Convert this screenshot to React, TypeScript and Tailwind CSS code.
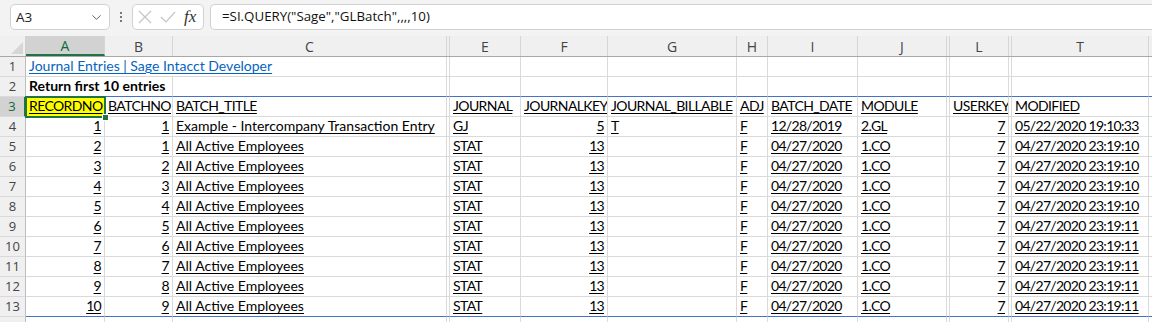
import { ChevronDown } from 'lucide-react'

// column widths, hidden columns show up as a 3px double line
const cols = [
  { key: 'A', w: 79 },
  { key: 'B', w: 68 },
  { key: 'C', w: 274 },
  { key: 'D', w: 3, hidden: true },
  { key: 'E', w: 71 },
  { key: 'F', w: 87 },
  { key: 'G', w: 129 },
  { key: 'H', w: 31 },
  { key: 'I', w: 90 },
  { key: 'J', w: 89 },
  { key: 'K', w: 3, hidden: true },
  { key: 'L', w: 59 },
  { key: 'M', w: 3, hidden: true },
  { key: 'T', w: 137 },
  { key: 'U', w: 60 },
]

const headers = ['RECORDNO', 'BATCHNO', 'BATCH_TITLE', '', 'JOURNAL', 'JOURNALKEY', 'JOURNAL_BILLABLE', 'ADJ', 'BATCH_DATE', 'MODULE', '', 'USERKEY', '', 'MODIFIED', '']

type Entry = [number, number, string, string, number, string, string, string, string, number, string]

const entries: Entry[] = [
  [1, 1, 'Example - Intercompany Transaction Entry', 'GJ', 5, 'T', 'F', '12/28/2019', '2.GL', 7, '05/22/2020 19:10:33'],
  [2, 1, 'All Active Employees', 'STAT', 13, '', 'F', '04/27/2020', '1.CO', 7, '04/27/2020 23:19:10'],
  [3, 2, 'All Active Employees', 'STAT', 13, '', 'F', '04/27/2020', '1.CO', 7, '04/27/2020 23:19:10'],
  [4, 3, 'All Active Employees', 'STAT', 13, '', 'F', '04/27/2020', '1.CO', 7, '04/27/2020 23:19:10'],
  [5, 4, 'All Active Employees', 'STAT', 13, '', 'F', '04/27/2020', '1.CO', 7, '04/27/2020 23:19:10'],
  [6, 5, 'All Active Employees', 'STAT', 13, '', 'F', '04/27/2020', '1.CO', 7, '04/27/2020 23:19:11'],
  [7, 6, 'All Active Employees', 'STAT', 13, '', 'F', '04/27/2020', '1.CO', 7, '04/27/2020 23:19:11'],
  [8, 7, 'All Active Employees', 'STAT', 13, '', 'F', '04/27/2020', '1.CO', 7, '04/27/2020 23:19:11'],
  [9, 8, 'All Active Employees', 'STAT', 13, '', 'F', '04/27/2020', '1.CO', 7, '04/27/2020 23:19:11'],
  [10, 9, 'All Active Employees', 'STAT', 13, '', 'F', '04/27/2020', '1.CO', 7, '04/27/2020 23:19:11'],
]

const cellFont = { fontFamily: 'Lato, "Liberation Sans", sans-serif' }

// Lato is wider than Calibri on caps and digits, so tighten those
function tightness(v: string) {
  if (/^[0-9/: .]+$/.test(v)) return 'tracking-[-0.7px]'
  if (/^[A-Z0-9_.]+$/.test(v)) return 'tracking-[-0.6px]'
  return ''
}

function RowHead({ n, selected }: { n: number | string; selected?: boolean }) {
  return (
    <div
      className={
        'w-[26px] shrink-0 h-full flex items-center justify-center text-[13px] border-b border-b-[#d9d9d9] ' +
        (selected
          ? 'bg-[#d2d2d2] text-[#0e6b38] border-r-2 border-r-[#217346]'
          : 'bg-[#f0f0f0] text-[#444] border-r border-r-[#bdbdbd]')
      }
      style={{ fontFamily: '"Open Sans", sans-serif' }}
    >
      {n}
    </div>
  )
}

function Cell({ w, children, right, bottom, className = '' }: { w: number; children?: React.ReactNode; right?: boolean; bottom?: string; className?: string }) {
  return (
    <div
      className={
        'shrink-0 h-full border-r border-r-[#dadada] border-b overflow-hidden whitespace-nowrap flex items-end pb-[1px] text-[14px] leading-[18px] text-black ' +
        (w > 6 ? 'px-[3px] ' : 'px-0 ') +
        (right ? 'justify-end ' : '') +
        (bottom === 'blue' ? 'border-b-[#4472c4] ' : 'border-b-[#dadada] ') +
        className
      }
      style={{ width: w }}
    >
      {children}
    </div>
  )
}

function U({ v }: { v: string | number }) {
  const s = String(v)
  return <span className={'underline underline-offset-[2px] decoration-[1px] ' + tightness(s)}>{s}</span>
}

export default function App() {
  return (
    <div className="w-[1152px] h-[322px] overflow-hidden bg-white select-none" style={cellFont}>
      {/* formula bar */}
      <div className="h-[36px] bg-[#f3f3f3] flex items-start pt-[4px] pl-[10px]">
        <div className="w-[100px] h-[26px] bg-white border border-[#d1d1d1] rounded-[5px] flex items-center justify-between pl-[5px] pr-[5px]">
          <span className="text-[13.5px] text-[#222]" style={{ fontFamily: '"Open Sans", sans-serif' }}>A3</span>
          <ChevronDown className="w-[15px] h-[15px] text-[#555]" strokeWidth={1.5} />
        </div>
        <div className="w-[22px] h-[26px] flex flex-col items-center justify-center gap-[2px]">
          <span className="w-[2px] h-[2px] bg-[#777]" />
          <span className="w-[2px] h-[2px] bg-[#777]" />
          <span className="w-[2px] h-[2px] bg-[#777]" />
        </div>
        <div className="w-[72px] h-[26px] bg-white border border-[#d1d1d1] rounded-[5px] flex items-center pl-[5px] gap-[8px]">
          <svg width="14" height="14" viewBox="0 0 14 14" className="text-[#c4c4c4]">
            <path d="M1 1 L13 13 M13 1 L1 13" stroke="currentColor" strokeWidth="1.2" fill="none" />
          </svg>
          <svg width="16" height="14" viewBox="0 0 16 14" className="text-[#c4c4c4]">
            <path d="M1 7 L6 12 L15 2" stroke="currentColor" strokeWidth="1.2" fill="none" />
          </svg>
          <span className="italic text-[17px] text-[#333] leading-none -mt-[2px]" style={{ fontFamily: '"Liberation Serif", serif' }}>fx</span>
        </div>
        <div className="flex-1 ml-[6px] h-[26px] bg-white border border-[#d1d1d1] border-r-0 rounded-l-[5px] flex items-center pl-[11px]">
          <span className="text-[13.3px] text-[#111]" style={{ fontFamily: '"Open Sans", sans-serif' }}>=SI.QUERY("Sage","GLBatch",,,,10)</span>
        </div>
      </div>

      {/* column headers */}
      <div className="h-[21px] flex bg-[#f0f0f0] border-b border-b-[#a8a8a8]">
        <div className="w-[26px] shrink-0 h-full border-r border-r-[#d0d0d0] flex items-end justify-end p-[2px]">
          <svg width="12" height="12" viewBox="0 0 12 12">
            <path d="M12 0 L12 12 L0 12 Z" fill="#d6d6d6" />
          </svg>
        </div>
        {cols.map((c) => (
          <div
            key={c.key}
            className={
              'shrink-0 h-full flex items-center justify-center text-[14px] border-r border-r-[#d6d6d6] ' +
              (c.key === 'A' ? 'bg-[#d2d2d2] text-[#0e6b38] border-b-2 border-b-[#217346]' : 'text-[#444]')
            }
            style={{ width: c.w, fontFamily: '"Open Sans", sans-serif' }}
          >
            {c.hidden || c.key === 'U' ? '' : c.key}
          </div>
        ))}
      </div>

      {/* row 1 */}
      <div className="h-[20px] flex">
        <RowHead n={1} />
        <Cell w={79 + 68 + 274}>
          <span className="text-[#0563c1] underline underline-offset-[2px] decoration-[1px]">Journal Entries | Sage Intacct Developer</span>
        </Cell>
        {cols.slice(3).map((c) => <Cell key={c.key} w={c.w} />)}
      </div>

      {/* row 2 */}
      <div className="h-[20px] flex">
        <RowHead n={2} />
        <Cell w={79 + 68} bottom="blue">
          <span className="font-bold">Return first 10 entries</span>
        </Cell>
        {cols.slice(2).map((c) => <Cell key={c.key} w={c.w} bottom="blue" />)}
      </div>

      {/* row 3, query headers */}
      <div className="h-[20px] flex relative">
        <RowHead n={3} selected />
        {cols.map((c, i) => (
          <Cell key={c.key} w={c.w} className={i === 0 ? 'bg-[#ffff00]' : ''}>
            {headers[i] && <U v={headers[i]} />}
          </Cell>
        ))}
        {/* selection box on A3 */}
        <div className="absolute left-[25px] top-[-1px] w-[81px] h-[22px] border-2 border-[#217346] pointer-events-none" />
        <div className="absolute left-[102px] top-[17px] w-[7px] h-[7px] bg-[#217346] border border-white" />
      </div>

      {/* data rows */}
      {entries.map((e, r) => {
        const last = r === entries.length - 1
        const b = last ? 'blue' : undefined
        const vals: [string | number, boolean][] = [
          [e[0], true], [e[1], true], [e[2], false], ['', false], [e[3], false], [e[4], true], [e[5], false],
          [e[6], false], [e[7], false], [e[8], false], ['', false], [e[9], true], ['', false], [e[10], false], ['', false],
        ]
        return (
          <div key={r} className="h-[20px] flex">
            <RowHead n={r + 4} />
            {cols.map((c, i) => (
              <Cell key={c.key} w={c.w} right={vals[i][1]} bottom={b}>
                {vals[i][0] !== '' && <U v={vals[i][0]} />}
              </Cell>
            ))}
          </div>
        )
      })}

      {/* partial row 14 */}
      <div className="h-[20px] flex">
        <RowHead n="" />
        {cols.map((c) => <Cell key={c.key} w={c.w} />)}
      </div>
    </div>
  )
}
